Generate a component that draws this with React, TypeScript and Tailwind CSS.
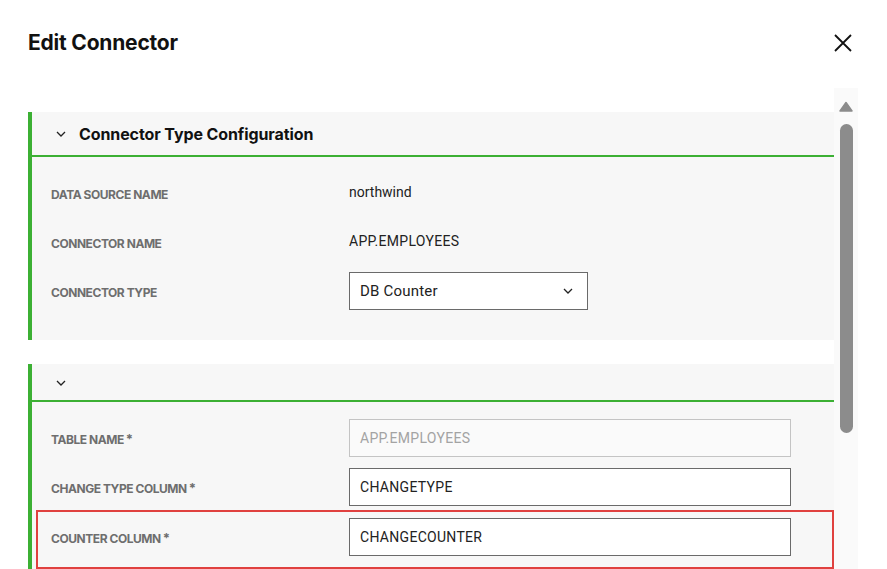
import React from "react";

const Chevron = ({ className = "" }: { className?: string }) => (
  <svg width="10" height="6" viewBox="0 0 10 6" className={className} fill="none">
    <path d="M1 1l4 4 4-4" stroke="#222" strokeWidth="1.3" />
  </svg>
);

const Label = ({ children, req }: { children: React.ReactNode; req?: boolean }) => (
  <div
    className="mt-[3px] w-[298px] shrink-0 text-[12px] font-bold uppercase tracking-[-0.45px] text-[#6e6e6e]"
    style={{ fontFamily: "Inter, 'Liberation Sans', sans-serif" }}
  >
    {children}
    {req && <span className="ml-[2px] text-[13px] text-[#6e6e6e]">*</span>}
  </div>
);

const valueFont = { fontFamily: "Roboto, 'Liberation Sans', sans-serif" };

export default function App() {
  return (
    <div className="h-[569px] w-[887px] overflow-hidden bg-white" style={{ fontFamily: "Inter, 'Liberation Sans', sans-serif" }}>
      {/* Header */}
      <div className="flex h-[88px] items-start justify-between pl-[28px] pr-[35px] pt-[29px]">
        <h1 className="text-[21px] font-bold leading-[28px] tracking-[-0.2px] text-[#111]">Edit Connector</h1>
        <svg width="18" height="18" viewBox="0 0 18 18" className="mt-[5px]" fill="none">
          <path d="M1 1l16 16M17 1L1 17" stroke="#111" strokeWidth="1.8" />
        </svg>
      </div>

      <div className="flex pl-[28px]">
        {/* Scroll content */}
        <div className="flex w-[806px] flex-col pt-[24px]">
          {/* Panel 1 */}
          <div className="border-l-4 border-[#3cb034] bg-[#f7f7f7]">
            <div className="flex h-[45px] items-center gap-[13px] border-b-2 border-[#3cb034] pl-[24px]">
              <Chevron className="mt-[1px]" />
              <span className="text-[16px] font-bold tracking-[-0.1px] text-[#111]">Connector Type Configuration</span>
            </div>
            <div className="flex flex-col gap-[11px] pb-[30px] pl-[19px] pt-[17px]">
              <div className="flex h-[38px] items-center">
                <Label>Data Source Name</Label>
                <span className="-mt-[2px] text-[14px] text-[#222]" style={valueFont}>northwind</span>
              </div>
              <div className="flex h-[38px] items-center">
                <Label>Connector Name</Label>
                <span className="-mt-[1px] text-[14px] tracking-[0.3px] text-[#222]" style={valueFont}>APP.EMPLOYEES</span>
              </div>
              <div className="flex h-[38px] items-center">
                <Label>Connector Type</Label>
                <div className="flex h-[38px] w-[239px] items-center justify-between border border-[#6a6a6a] bg-white pl-[10px] pr-[14px]">
                  <span className="text-[15px] tracking-[0.2px] text-[#222]" style={valueFont}>DB Counter</span>
                  <Chevron />
                </div>
              </div>
            </div>
          </div>

          <div className="h-[24px]" />

          {/* Panel 2 */}
          <div className="border-l-4 border-[#3cb034] bg-[#f7f7f7]">
            <div className="flex h-[38px] items-center border-b-2 border-[#3cb034] pl-[24px]">
              <Chevron className="mt-[2px]" />
            </div>
            <div className="flex flex-col pl-[4px] pt-[17px]">
              <div className="flex h-[38px] items-center pl-[15px]">
                <Label req>Table Name</Label>
                <div className="flex h-[38px] w-[442px] items-center border border-[#c4c4c4] bg-[#fafafa] px-[10px]">
                  <span className="text-[14px] tracking-[0.3px] text-[#a3a3a3]" style={valueFont}>APP.EMPLOYEES</span>
                </div>
              </div>
              <div className="mt-[11px] flex h-[38px] items-center pl-[15px]">
                <Label req>Change Type Column</Label>
                <div className="flex h-[38px] w-[442px] items-center border border-[#6a6a6a] bg-white px-[10px]">
                  <span className="text-[14px] tracking-[0.3px] text-[#222]" style={valueFont}>CHANGETYPE</span>
                </div>
              </div>
              <div className="mt-[4px] flex items-center border-2 border-[#e0413f] pb-[11px] pl-[13px] pt-[6px]">
                <Label req>Counter Column</Label>
                <div className="flex h-[38px] w-[442px] items-center border border-[#6a6a6a] bg-white px-[10px]">
                  <span className="text-[14px] tracking-[0.3px] text-[#222]" style={valueFont}>CHANGECOUNTER</span>
                </div>
              </div>
            </div>
          </div>
        </div>

        {/* Scrollbar */}
        <div className="flex h-[481px] w-[24px] flex-col items-center bg-[#fafafa]">
          <svg width="14" height="11" viewBox="0 0 14 11" className="mt-[13px]">
            <path d="M7 1.5L13 10H1z" fill="#8c8c8c" stroke="#8c8c8c" strokeWidth="1.5" strokeLinejoin="round" />
          </svg>
          <div className="mt-[12px] h-[309px] w-[13px] rounded-[7px] bg-[#8c8c8c]" />
        </div>
      </div>
    </div>
  );
}
